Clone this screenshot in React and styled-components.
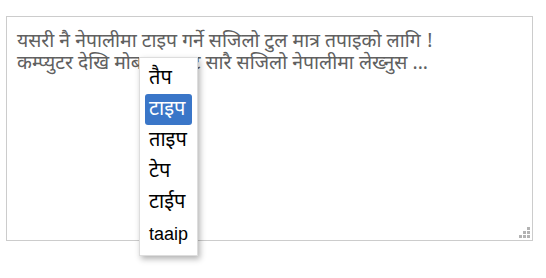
import React from "react";
import styled, { createGlobalStyle } from "styled-components";

const Global = createGlobalStyle`
  html, body { margin: 0; padding: 0; background: #fff; }
  body { width: 546px; height: 278px; overflow: hidden; }
`;

const Page = styled.div`
  padding: 16px 0 0 6px;
`;

const Editor = styled.div`
  position: relative;
  box-sizing: border-box;
  width: 527px;
  height: 225px;
  border: 1px solid #cccccc;
  padding: 15px 10px;
  font-family: "Noto Sans Devanagari", "Nirmala UI", "Mangal", "Liberation Sans", sans-serif;
  font-size: 19.4px;
  line-height: 22px;
  color: #606060;
`;

const Line = styled.div`
  white-space: nowrap;
`;

const Suggestions = styled.ul`
  position: absolute;
  left: 132px;
  top: 40px;
  width: 59px;
  box-sizing: border-box;
  margin: 0;
  padding: 5px 5px 6px 5px;
  list-style: none;
  background: #fff;
  border: 1px solid #dddddd;
  box-shadow: 2px 3px 6px rgba(0, 0, 0, 0.3);
  display: flex;
  flex-direction: column;
`;

const Item = styled.li`
  height: 31px;
  display: flex;
  align-items: center;
  padding: 0 4px;
  border-radius: 3px;
  font-family: ${(p) =>
    p.$latin
      ? '"Liberation Sans", Arial, sans-serif'
      : '"Noto Sans Devanagari", "Nirmala UI", "Mangal", "Liberation Sans", sans-serif'};
  font-size: ${(p) => (p.$latin ? "18px" : "20px")};
  color: ${(p) => (p.$active ? "#ffffff" : "#000000")};
  background: ${(p) => (p.$active ? "#3a76c8" : "transparent")};
`;

const Grip = styled.svg`
  position: absolute;
  right: 2px;
  bottom: 2px;
`;

const suggestions = ["तैप", "टाइप", "ताइप", "टेप", "टाईप", "taaip"];

export default function App() {
  return (
    <>
      <Global />
      <Page>
        <Editor>
          <Line>यसरी नै नेपालीमा टाइप गर्ने सजिलो टुल मात्र तपाइको लागि !</Line>
          <Line>कम्प्युटर देखि मोबाइल बाट सारै सजिलो नेपालीमा लेख्नुस ...</Line>
          <Suggestions>
            {suggestions.map((s, i) => (
              <Item key={s} $active={i === 1} $latin={i === 5}>
                {s}
              </Item>
            ))}
          </Suggestions>
          <Grip width="11" height="11" viewBox="0 0 11 11">
            <rect x="8" y="0" width="3" height="3" fill="#b3b3b3" />
            <rect x="4" y="4" width="3" height="3" fill="#b3b3b3" />
            <rect x="8" y="4" width="3" height="3" fill="#b3b3b3" />
            <rect x="0" y="8" width="3" height="3" fill="#b3b3b3" />
            <rect x="4" y="8" width="3" height="3" fill="#b3b3b3" />
            <rect x="8" y="8" width="3" height="3" fill="#b3b3b3" />
          </Grip>
        </Editor>
      </Page>
    </>
  );
}
